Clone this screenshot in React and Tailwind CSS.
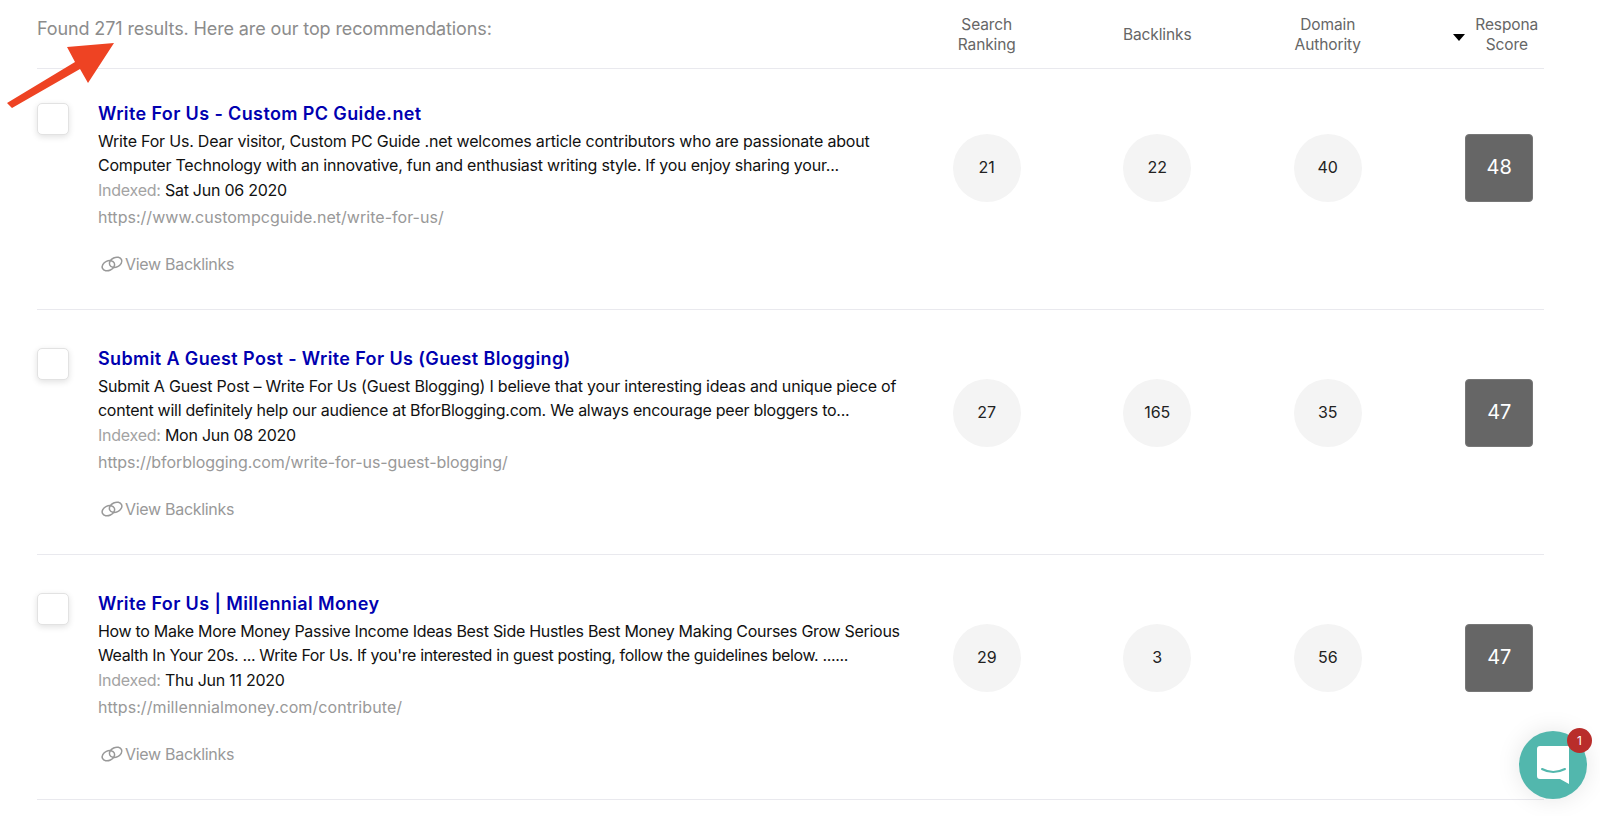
const rows = [
  { title: "Write For Us - Custom PC Guide.net", l1: "Write For Us. Dear visitor, Custom PC Guide .net welcomes article contributors who are passionate about", l2: "Computer Technology with an innovative, fun and enthusiast writing style. If you enjoy sharing your...", date: "Sat Jun 06 2020", url: "https://www.custompcguide.net/write-for-us/", a: 21, b: 22, c: 40, s: 48, t1: "tracking-[-0.2px]", t2: "tracking-[-0.22px]", tu: "tracking-[0.03px]" },
  { title: "Submit A Guest Post - Write For Us (Guest Blogging)", l1: "Submit A Guest Post – Write For Us (Guest Blogging) I believe that your interesting ideas and unique piece of", l2: "content will definitely help our audience at BforBlogging.com. We always encourage peer bloggers to...", date: "Mon Jun 08 2020", url: "https://bforblogging.com/write-for-us-guest-blogging/", a: 27, b: 165, c: 35, s: 47, t1: "tracking-[-0.2px]", t2: "tracking-[-0.27px]", tu: "tracking-[-0.07px]" },
  { title: "Write For Us | Millennial Money", l1: "How to Make More Money Passive Income Ideas Best Side Hustles Best Money Making Courses Grow Serious", l2: "Wealth In Your 20s. ... Write For Us. If you're interested in guest posting, follow the guidelines below. ......", date: "Thu Jun 11 2020", url: "https://millennialmoney.com/contribute/", a: 29, b: 3, c: 56, s: 47, t1: "tracking-[-0.3px]", t2: "tracking-[-0.36px]", tu: "tracking-[0.08px]" },
];

function Circle({ v }) {
  return (
    <div className="w-[170.5px] flex justify-center">
      <div className="w-[68px] h-[68px] rounded-full bg-[#f4f4f4] flex items-center justify-center text-[16px] leading-[20px] pb-[2px] text-[#222]">{v}</div>
    </div>
  );
}

function Row({ r, first }) {
  return (
    <div className={first ? "flex h-[241px] border-b border-[#e9e9ee]" : "flex h-[245px] pt-[4px] border-b border-[#e9e9ee]"}>
      <div className="w-[32px] h-[32px] mt-[34px] rounded-[5px] border border-[#e2e2e2] bg-white shadow-[0_2px_6px_rgba(0,0,0,0.12)] shrink-0"></div>
      <div className="w-[800px] ml-[29px] pt-[32px] shrink-0">
        <div className="text-[18px] leading-[26px] font-semibold text-[#0000b0] tracking-[0.38px] whitespace-nowrap">{r.title}</div>
        <div className={"text-[16px] leading-[24px] mt-[2px] text-[#111] whitespace-nowrap " + r.t1}>{r.l1}</div>
        <div className={"text-[16px] leading-[24px] text-[#111] whitespace-nowrap " + r.t2}>{r.l2}</div>
        <div className="text-[16px] leading-[25px] mt-[1px] tracking-[-0.25px]"><span className="text-[#a3a3a3]">Indexed: </span><span className="text-[#111]">{r.date}</span></div>
        <div className={"text-[16px] leading-[24px] mt-[2px] text-[#999] " + r.tu}>{r.url}</div>
        <div className="flex items-center mt-[23px] text-[#999] text-[16px] leading-[24px] tracking-[-0.3px]">
          <svg width="24" height="18" viewBox="0 0 24 18" fill="none" stroke="#999" strokeWidth="1.5" className="ml-[2px] mr-px">
            <g transform="rotate(-25 12 9)">
              <ellipse cx="8" cy="9" rx="6.5" ry="4.8" />
              <ellipse cx="16" cy="9" rx="6.5" ry="4.8" />
            </g>
          </svg>
          <span>View Backlinks</span>
        </div>
      </div>
      <div className="flex pt-[65px] ml-[3.5px]">
        <Circle v={r.a} />
        <Circle v={r.b} />
        <Circle v={r.c} />
        <div className="w-[170.5px] pl-[2px] flex justify-center">
          <div className="w-[68px] h-[68px] rounded-[4px] bg-[#666] border border-[#777] flex items-center justify-center text-[20px] leading-[28px] pb-[2px] text-white">{r.s}</div>
        </div>
      </div>
    </div>
  );
}

export default function App() {
  return (
    <div className="h-[816px] w-[1600px] bg-white relative overflow-hidden font-['Inter','Liberation_Sans',sans-serif]">
      <div className="ml-[37px] w-[1507px]">
        <div className="flex h-[69px] border-b border-[#e9e9ee] pt-[14px]">
          <div className="w-[861px] text-[18px] leading-[26px] text-[#8c8c8c] tracking-[-0.12px] pt-[2px] shrink-0">Found 271 results. Here are our top recommendations:</div>
          <div className="flex text-[15.5px] leading-[20.5px] text-[#666] text-center tracking-[-0.1px] pt-[0.5px]">
            <div className="w-[170.5px] pl-[7px]">Search<br />Ranking</div>
            <div className="w-[170.5px] pl-[7px] pt-[10px]">Backlinks</div>
            <div className="w-[170.5px] pl-[7px]">Domain<br />Authority</div>
            <div className="w-[170.5px] pl-[24px] relative">Respona<br />Score
              <svg width="12" height="7" viewBox="0 0 12 7" className="absolute left-[43px] top-[19px]"><path d="M0 0h12L6 7z" fill="#000" /></svg>
            </div>
          </div>
        </div>
        {rows.map((r, i) => <Row key={r.title} r={r} first={i === 0} />)}
      </div>

      <svg width="120" height="72" viewBox="0 0 120 72" className="absolute left-0 top-[40px]">
        <path d="M7 63 L75 22 L67 7 L114 3 L88 43 L80 29 L12 68 Z" fill="#ee4323" />
      </svg>

      <div className="absolute left-[1519px] top-[731px] w-[68px] h-[68px] rounded-full bg-[#52b7ad] shadow-[0_0_24px_rgba(0,0,0,0.10)] flex items-center justify-center">
        <svg width="32" height="38" viewBox="0 0 32 38" className="-mt-[1px]">
          <path d="M3 0H32V38L23 33H3Q0 33 0 30V3Q0 0 3 0Z" fill="#fff" />
          <path d="M5 23Q16 29 28 23" fill="none" stroke="#52b7ad" strokeWidth="2" strokeLinecap="round" />
        </svg>
      </div>
      <div className="absolute left-[1567px] top-[728px] w-[25px] h-[25px] rounded-full bg-[#b92d2b] text-white text-[12px] flex items-center justify-center">1</div>
    </div>
  );
}
